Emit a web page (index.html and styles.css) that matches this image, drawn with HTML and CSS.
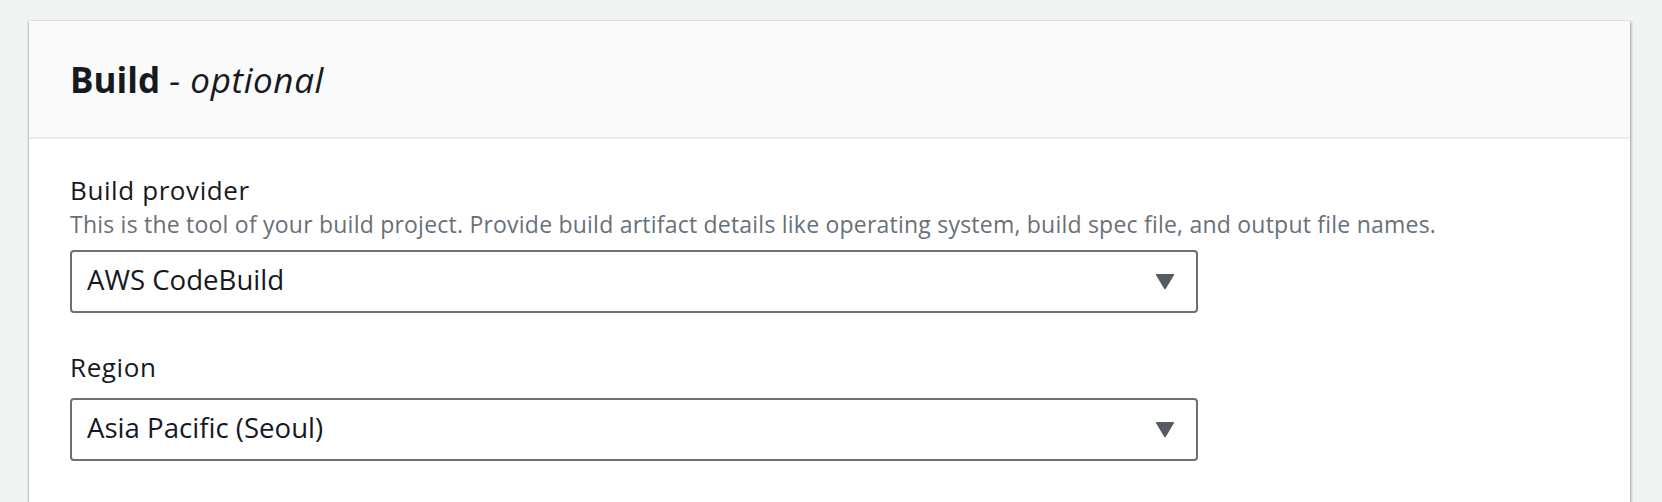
FILE: index.html
```html
<!DOCTYPE html>
<html>
<head>
<meta charset="utf-8">
<link rel="stylesheet" href="styles.css">
</head>
<body>
<div class="page">
  <section class="card">
    <header class="card-header">
      <h2 class="card-title">Build <i class="optional">- optional</i></h2>
    </header>
    <div class="card-body">
      <div class="field">
        <label class="field-label">Build provider</label>
        <div class="field-desc">This is the tool of your build project. Provide build artifact details like operating system, build spec file, and output file names.</div>
        <div class="select">
          <span class="select-value">AWS CodeBuild</span>
          <svg class="caret" width="20" height="17" viewBox="0 0 20 17"><path d="M1.5 1 H18.5 Q19.6 1 19 2 L11 15.5 Q10 17 9 15.5 L1 2 Q0.4 1 1.5 1 Z" fill="#545b64"/></svg>
        </div>
      </div>
      <div class="field field-region">
        <label class="field-label">Region</label>
        <div class="select select-region">
          <span class="select-value">Asia Pacific (Seoul)</span>
          <svg class="caret" width="20" height="17" viewBox="0 0 20 17"><path d="M1.5 1 H18.5 Q19.6 1 19 2 L11 15.5 Q10 17 9 15.5 L1 2 Q0.4 1 1.5 1 Z" fill="#545b64"/></svg>
        </div>
      </div>
    </div>
  </section>
</div>
</body>
</html>
```
FILE: styles.css
```css
html, body {
  margin: 0;
  padding: 0;
  background: #f2f3f3;
  font-family: "Open Sans", "Noto Sans", sans-serif;
  color: #16191f;
}

.page {
  padding: 21px 32px 0 29px;
  height: 481px;
  overflow: hidden;
}

.card {
  background: #ffffff;
  height: 520px;
  box-shadow: 0 0 0 1px rgba(0, 28, 36, 0.07), 2px 1px 2px rgba(0, 28, 36, 0.2), -1px 1px 2px rgba(0, 28, 36, 0.18);
}

.card-header {
  height: 118px;
  box-sizing: border-box;
  background: #fafafa;
  border-bottom: 2px solid #eaeded;
  display: flex;
  align-items: center;
  padding: 0 41px;
}

.card-title {
  margin: 0;
  font-size: 35px;
  line-height: 40px;
  font-weight: 700;
  color: #16191f;
  padding-top: 2px;
}

.optional {
  font-weight: 400;
  font-style: italic;
  letter-spacing: 0.6px;
}

.card-body {
  padding: 33px 41px 0 41px;
}

.field {
  display: flex;
  flex-direction: column;
  align-items: flex-start;
}

.field-label {
  font-size: 26px;
  line-height: 36px;
  letter-spacing: 0.6px;
  color: #16191f;
}

.field-desc {
  font-size: 23px;
  line-height: 32px;
  letter-spacing: 0.22px;
  color: #687078;
  white-space: nowrap;
}

.select {
  margin-top: 10px;
  width: 1128px;
  height: 63px;
  box-sizing: border-box;
  border: 2px solid #687078;
  border-radius: 4px;
  background: #ffffff;
  display: flex;
  align-items: center;
  justify-content: space-between;
  padding: 0 21px 0 15px;
}

.select-value {
  font-size: 27.6px;
  line-height: 55px;
  margin-bottom: 4px;
  color: #16191f;
}

.caret {
  display: block;
}

.field-region {
  margin-top: 36px;
}

.select-region {
  margin-top: 13px;
}
```
